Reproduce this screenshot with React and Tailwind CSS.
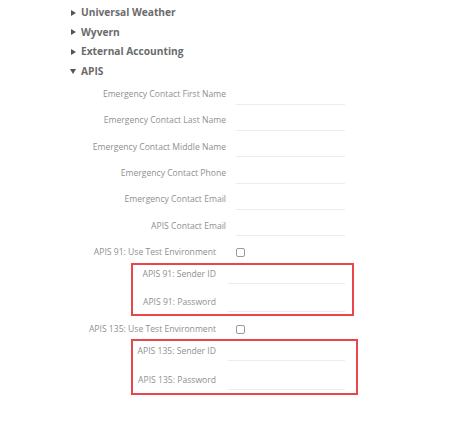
import React from "react";

const fields = [
  "Emergency Contact First Name",
  "Emergency Contact Last Name",
  "Emergency Contact Middle Name",
  "Emergency Contact Phone",
  "Emergency Contact Email",
  "APIS Contact Email",
];

const Caret = ({ open }) =>
  open ? (
    <svg width="6" height="5" viewBox="0 0 6 5" className="fill-[#555]">
      <polygon points="0,0 6,0 3,5" />
    </svg>
  ) : (
    <svg width="5" height="6" viewBox="0 0 5 6" className="fill-[#555]">
      <polygon points="0,0 5,3 0,6" />
    </svg>
  );

const Section = ({ title, open }) => (
  <div className="h-[19.6px] flex items-center gap-[5px] pl-[70px]">
    <span className="w-[6px] flex justify-center">
      <Caret open={open} />
    </span>
    <span className="text-[10.2px] font-bold text-[#6b6b6b] whitespace-nowrap">{title}</span>
  </div>
);

const FieldRow = ({ label }) => (
  <div className="h-[26.33px] flex items-center">
    <div className="w-[226px] text-right text-[8.6px] text-[#8f8f8f] whitespace-nowrap">{label}</div>
    <div className="ml-[10px] w-[109px] h-[20px] border-b border-[#ececec]" />
  </div>
);

const CheckRow = ({ label, className }) => (
  <div className={`flex items-center ${className}`}>
    <div className="w-[226px] pr-[10px] text-right text-[8.6px] text-[#8f8f8f] whitespace-nowrap">{label}</div>
    <div className="ml-[10px] w-[9px] h-[9px] rounded-[2px] border border-[#999]" />
  </div>
);

const BoxRow = ({ label, className }) => (
  <div className={`flex items-start ${className}`}>
    <div className="w-[83px] pt-[2px] text-right text-[8.6px] leading-[14px] text-[#8f8f8f] whitespace-nowrap">{label}</div>
    <div className="ml-[12px] w-[117px] h-[19px] border-b border-[#ececec]" />
  </div>
);

const RedBox = ({ items, className, gap }) => (
  <div className={`ml-[131px] border-2 border-[#e8474a] ${className}`}>
    <BoxRow label={items[0]} />
    <BoxRow label={items[1]} className={gap} />
  </div>
);

export default function App() {
  return (
    <div
      className="w-[457px] h-[431px] bg-white pt-[3px]"
      style={{ fontFamily: '"Open Sans", Arial, sans-serif' }}
    >
      <Section title="Universal Weather" />
      <Section title="Wyvern" />
      <Section title="External Accounting" />
      <Section title="APIS" open />
      <div>
        {fields.map((f) => (
          <FieldRow key={f} label={f} />
        ))}
        <CheckRow label="APIS 91: Use Test Environment" className="h-[24px] pt-[2px]" />
        <RedBox
          items={["APIS 91: Sender ID", "APIS 91: Password"]}
          className="w-[223px] pb-[2px]"
          gap="mt-[9px]"
        />
        <CheckRow label="APIS 135: Use Test Environment" className="h-[23px] pt-[3px]" />
        <RedBox
          items={["APIS 135: Sender ID", "APIS 135: Password"]}
          className="w-[227px] pt-[1px] pb-[3px]"
          gap="mt-[10px]"
        />
      </div>
    </div>
  );
}
